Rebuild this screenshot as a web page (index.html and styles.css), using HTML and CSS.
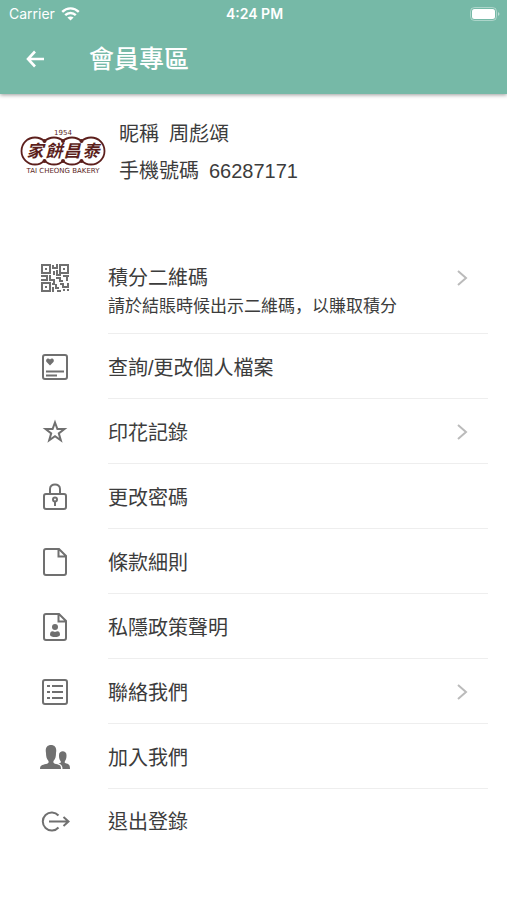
FILE: index.html
```html
<!DOCTYPE html>
<html lang="zh-HK">
<head>
    <meta charset="UTF-8">
    <meta name="viewport" content="width=device-width, initial-scale=1.0">
    <title>會員專區</title>
    <link rel="stylesheet" href="styles.css">
</head>
<body>
    <header class="header">
        <div class="status">
            <div class="carrier">
                <span>Carrier</span>
                <svg width="19" height="14" viewBox="0 0 19 14" fill="none" stroke="#fff" stroke-width="2.4">
                    <path d="M1.2 4.8C6 0.2 13 0.2 17.8 4.8M4.2 8.2c3-2.9 7.6-2.9 10.6 0"/>
                    <path d="M9.5 13.6L6.4 10.5c1.8-1.5 4.4-1.5 6.2 0z" fill="#fff" stroke="none"/>
                </svg>
            </div>
            <span class="time">4:24 PM</span>
            <div class="battery">
                <svg width="30" height="14" viewBox="0 0 30 14">
                    <rect x="0.5" y="0.5" width="26" height="13" rx="4" fill="none" stroke="#fff" stroke-opacity="0.4"/>
                    <rect x="2" y="2" width="23" height="10" rx="2.5" fill="#fff"/>
                    <path d="M28 5v4c2-1 2-3 0-4z" fill="#fff" fill-opacity="0.5"/>
                </svg>
            </div>
        </div>
        <div class="bar">
            <button class="back" type="button" aria-label="返回">
                <svg width="20" height="18" viewBox="0 0 20 18" fill="none" stroke="#fff" stroke-width="2.6">
                    <path d="M18 9H2.500M9 1.500L2 9l7 7.500"/>
                </svg>
            </button>
            <h1 class="title">會員專區</h1>
        </div>
    </header>

    <section class="profile">
        <svg class="logo" width="86" height="50" viewBox="0 0 86 50">
            <g fill="#5c1f1c" stroke="#5c1f1c" stroke-width="1.8">
                <circle cx="15" cy="25" r="13.5"/><circle cx="34" cy="25" r="13.5"/>
                <circle cx="52" cy="25" r="13.5"/><circle cx="71" cy="25" r="13.5"/>
            </g>
            <g fill="#fff">
                <circle cx="15" cy="25" r="12.6"/><circle cx="34" cy="25" r="12.6"/>
                <circle cx="52" cy="25" r="12.6"/><circle cx="71" cy="25" r="12.6"/>
            </g>
            <g fill="#5c1f1c">
                <circle cx="24.5" cy="15" r="2"/><circle cx="43" cy="15" r="2"/><circle cx="61.5" cy="15" r="2"/>
                <circle cx="24.5" cy="35" r="2"/><circle cx="43" cy="35" r="2"/><circle cx="61.5" cy="35" r="2"/>
            </g>
            <g class="logo-name" text-anchor="middle">
                <text x="15" y="31">家</text><text x="34" y="31">餅</text>
                <text x="52" y="31">昌</text><text x="71" y="31">泰</text>
            </g>
            <text class="logo-small" x="43" y="9" text-anchor="middle">1954</text>
            <text class="logo-small" x="43" y="47" text-anchor="middle">TAI CHEONG BAKERY</text>
        </svg>
        <dl class="info">
            <div class="info-row"><dt>昵稱</dt><dd>周彪頌</dd></div>
            <div class="info-row"><dt>手機號碼</dt><dd>66287171</dd></div>
        </dl>
    </section>

    <nav class="menu">
        <a class="item item-first" href="#">
            <svg class="icon" viewBox="0 0 32 32">
                <g fill="none" stroke="#707070" stroke-width="2">
                    <path d="M3 3h8v8H3zM21 3h8v8h-8zM3 21h8v8H3z"/>
                    <path d="M14 3v3h4V2M15 9v4M18 8v5h4M2 14h6v4H2M11 13v5h4v4h-2M17 16h4v3h3M24 14h6M28 13v6M14 25v5M17 22v4h3M21 22h3v3h5v-4M18 29h4M24 28h2M28 28h2"/>
                </g>
                <path d="M6 6h2v2H6zM24 6h2v2h-2zM6 24h2v2H6z" fill="#707070"/>
            </svg>
            <span class="text">
                <span class="label">積分二維碼</span>
                <span class="note" lang="zh-Hans">請於結賬時候出示二維碼，以賺取積分</span>
            </span>
            <svg class="arrow" viewBox="0 0 12 16"><path d="M2 1l8 7-8 7"/></svg>
        </a>
        <a class="item" href="#">
            <svg class="icon" viewBox="0 0 32 32">
                <g fill="none" stroke="#707070" stroke-width="2">
                    <rect x="4" y="4" width="24" height="24" rx="2"/>
                    <path d="M7 20.500h18M7 24.500h11"/>
                </g>
                <path d="M11 14.500L7.600 11C6 8.500 9 6 11 8.500 13 6 16 8.500 14.400 11z" fill="#707070"/>
            </svg>
            <span class="text"><span class="label">查詢/更改個人檔案</span></span>
        </a>
        <a class="item" href="#">
            <svg class="icon" viewBox="0 0 32 32" fill="none" stroke="#707070" stroke-width="2">
                <path d="M16 6.500l2.400 6.600h7l-5.600 4.300 2 6.800L16 20.100l-5.800 4.100 2-6.800-5.600-4.300h7z"/>
            </svg>
            <span class="text"><span class="label">印花記錄</span></span>
            <svg class="arrow" viewBox="0 0 12 16"><path d="M2 1l8 7-8 7"/></svg>
        </a>
        <a class="item" href="#">
            <svg class="icon" viewBox="0 0 32 32" fill="none" stroke="#707070" stroke-width="2">
                <rect x="5" y="13" width="22" height="15" rx="2"/>
                <path d="M11 13V8c0-6 10-6 10 0v5M16 20v5"/>
                <circle cx="16" cy="18.500" r="2"/>
            </svg>
            <span class="text"><span class="label">更改密碼</span></span>
        </a>
        <a class="item" href="#">
            <svg class="icon" viewBox="0 0 32 32" fill="none" stroke="#707070" stroke-width="2">
                <path d="M7 3h13l7 7v17q0 2-2 2H7q-2 0-2-2V5q0-2 2-2zM19.500 3v7.500H27"/>
            </svg>
            <span class="text"><span class="label">條款細則</span></span>
        </a>
        <a class="item" href="#">
            <svg class="icon" viewBox="0 0 32 32">
                <path d="M7 3h13l7 7v17q0 2-2 2H7q-2 0-2-2V5q0-2 2-2zM19.500 3v7.500H27" fill="none" stroke="#707070" stroke-width="2"/>
                <circle cx="16" cy="16" r="3" fill="#707070"/>
                <path d="M11 24c0-5 3-4 5-3 2-1 5-2 5 3q-1 2-5 2t-5-2z" fill="#707070"/>
            </svg>
            <span class="text"><span class="label">私隱政策聲明</span></span>
        </a>
        <a class="item" href="#">
            <svg class="icon" viewBox="0 0 32 32" fill="none" stroke="#707070" stroke-width="2">
                <rect x="4" y="4" width="24" height="24" rx="2"/>
                <path d="M8 10h3M13 10h11M8 16h3M13 16h11M8 22h3M13 22h11"/>
            </svg>
            <span class="text"><span class="label">聯絡我們</span></span>
            <svg class="arrow" viewBox="0 0 12 16"><path d="M2 1l8 7-8 7"/></svg>
        </a>
        <a class="item" href="#">
            <svg class="icon" viewBox="0 0 32 32" fill="#707070">
                <path d="M1 28c0-4 2-4 6-5 2-.6 3-1 2.500-3C7.500 18 7 15 7 12c-1-5 1-8 5-8s6 3 5 8c0 3-.5 6-2.500 8-.5 2 .5 2.400 2.500 3 4 1 5 1 5 5z"/>
                <path d="M23.500 28c0-3-1-4.500-4-5.500 2-.5 3-1 2-2.500-1.500-2-1.500-4-1.500-6 0-5 7.500-5 7.500 0 0 2 0 4-1.500 6-.8 2 0 2 1.500 2.500 3 .8 3.500 2 3.500 5.500z"/>
            </svg>
            <span class="text"><span class="label">加入我們</span></span>
        </a>
        <a class="item" href="#">
            <svg class="icon" viewBox="0 0 32 32" fill="none" stroke="#707070" stroke-width="2">
                <path d="M19.500 9.500a9 9 0 1 0 0 12M10 15.500h19M24.500 11L29.500 15.500l-5 4.500"/>
            </svg>
            <span class="text"><span class="label">退出登錄</span></span>
        </a>
    </nav>
</body>
</html>
```
FILE: styles.css
```css
* {box-sizing: border-box;}
body {margin: 0; background: #fff; color: #3c3c3c; font-family: "Liberation Sans", "Noto Sans CJK TC", sans-serif; font-size: 20px;}

.header {background: #76b9a7; color: #fff; box-shadow: 0 1px 4px rgba(0, 0, 0, 0.4);}
.status {display: grid; grid-template-columns: 1fr auto 1fr; align-items: center; height: 27px; padding: 0 7px 0 9px; font-family: Inter, sans-serif; font-size: 14px;}
.carrier {display: flex; align-items: center; gap: 6px;}
.time {font-weight: 600;}
.battery {display: flex; justify-content: flex-end;}
.bar {display: flex; align-items: center; height: 67px; padding: 0 26px 4px; gap: 43px;}
.back {display: flex; padding: 0; border: 0; background: none; cursor: pointer;}
.title {margin: 0; font-size: 25px; line-height: 36px; font-weight: 500;}

.profile {display: flex; align-items: flex-start; gap: 13px; padding: 22px 20px 0;}
.logo {flex: none; margin-top: 10px;}
.logo-name {fill: #5c1f1c; font-family: "Noto Sans CJK TC", sans-serif; font-size: 17px; font-weight: bold; font-style: italic;}
.logo-small {fill: #5c1f1c; font-family: "DejaVu Sans", sans-serif; font-size: 7px;}
.info {margin: 0;}
.info-row {display: flex; gap: 10px; line-height: 37px;}
.info-row dd {margin: 0;}

.menu {padding: 54px 19px 0 39px;}
.item {display: flex; align-items: center; color: inherit; text-decoration: none; position: relative; height: 65px;}
.item-first {height: 90px; align-items: flex-start; padding-top: 18px;}
.icon {flex: none; width: 32px; height: 32px; margin-right: 37px;}
.text {flex: 1; align-self: stretch; display: flex; flex-direction: column; justify-content: center; padding-top: 4px; border-bottom: 1px solid #eee;}
.item-first .text {justify-content: flex-start; padding-top: 2px;}
.item:last-child .text {padding-top: 0; border-bottom: 0;}
.label {line-height: 28px;}
.note {font-family: "Noto Sans CJK SC", sans-serif; font-size: 17px; line-height: 26px;}
/* the arrow lies over the divider's column */
.arrow {position: absolute; right: 20px; width: 12px; height: 16px; fill: none; stroke: #bbb; stroke-width: 2;}
.item-first .arrow {top: 26px;}
```
